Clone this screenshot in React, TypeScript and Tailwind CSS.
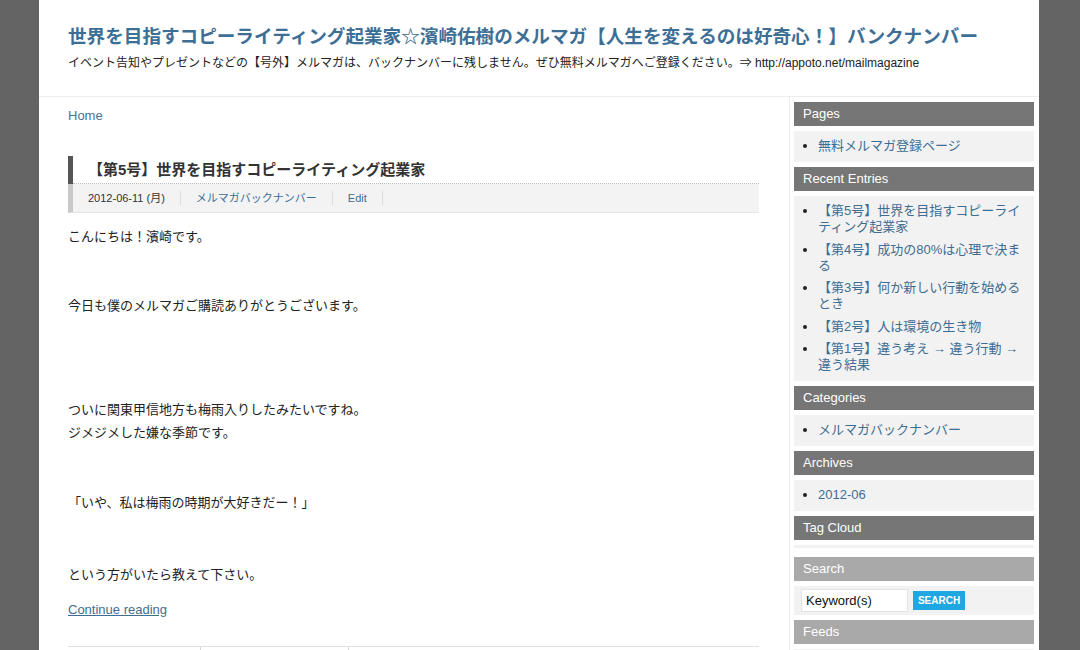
import React from 'react';

// Back-number archive page of the mail magazine blog
const recentEntries = [
  '【第5号】世界を目指すコピーライティング起業家',
  '【第4号】成功の80%は心理で決まる',
  '【第3号】何か新しい行動を始めるとき',
  '【第2号】人は環境の生き物',
  '【第1号】違う考え → 違う行動 → 違う結果',
];

function WidgetTitle({ label, light }: { label: string; light?: boolean }) {
  return (
    <div
      className={`h-[24px] flex items-center pl-[9px] text-[13px] text-white ${
        light ? 'bg-[#a9a9a9]' : 'bg-[#767676]'
      }`}
    >
      {label}
    </div>
  );
}

function LinkList({ items }: { items: string[] }) {
  return (
    <ul className="mt-[5px] bg-[#f2f2f2] pl-[24px] pr-[12px] pt-[7px] pb-[8px] list-disc marker:text-[#222]">
      {items.map((item, i) => (
        <li
          key={item}
          className={`text-[13px] leading-[16px] text-[#3d6d93] ${i > 0 ? 'mt-[6.5px]' : ''}`}
        >
          {item}
        </li>
      ))}
    </ul>
  );
}

export default function App() {
  return (
    <div className="min-h-screen bg-[#646464] font-['Liberation_Sans','Noto_Sans_CJK_JP',sans-serif] text-[#222]">
      <div className="ml-[39px] w-[1000px] bg-white">
        {/* Site header */}
        <header className="h-[97px] border-b border-[#ececec] pl-[29px] pt-[23px]">
          <h1 className="text-[18.6px] leading-[28px] font-bold text-[#3d6f96]">
            世界を目指すコピーライティング起業家☆濱崎佑樹のメルマガ【人生を変えるのは好奇心！】バンクナンバー
          </h1>
          <p className="mt-[1px] text-[12px] leading-[22px] text-[#222]">
            イベント告知やプレゼントなどの【号外】メルマガは、バックナンバーに残しません。ぜひ無料メルマガへご登録ください。⇒ http://appoto.net/mailmagazine
          </p>
        </header>

        <div className="flex">
          {/* Main column */}
          <main className="w-[751px] border-r border-[#ececec] pl-[29px] pr-[30px] pt-[10px] h-[553px] overflow-hidden">
            <div className="text-[13px] leading-[18px] text-[#4a7194]">Home</div>

            <article className="mt-[31px]">
              <div className="border-l-[5px] border-[#555]">
                <div className="h-[28px] border-b border-dotted border-[#bbb] flex items-center pl-[15px]">
                  <h2 className="text-[15px] font-bold text-[#333] leading-[20px]">
                    【第5号】世界を目指すコピーライティング起業家
                  </h2>
                </div>
              </div>
              <div className="h-[29px] border-l-[5px] border-[#c9c9c9] bg-[#f3f3f3] border-b border-b-[#e6e6e6] flex items-center pl-[15px] text-[11px]">
                <span className="text-[#333]">2012-06-11 (月)</span>
                <span className="mx-[15px] h-[14px] w-px bg-[#dcdcdc]" />
                <span className="text-[#3d6d93]">メルマガバックナンバー</span>
                <span className="mx-[15px] h-[14px] w-px bg-[#dcdcdc]" />
                <span className="text-[#3d6d93]">Edit</span>
                <span className="ml-[15px] h-[14px] w-px bg-[#dcdcdc]" />
              </div>

              <div className="text-[13px] leading-[23px] text-[#222]">
                <p className="mt-[12px]">こんにちは！濱崎です。</p>
                <p className="mt-[46px]">今日も僕のメルマガご購読ありがとうございます。</p>
                <p className="mt-[81px]">
                  ついに関東甲信地方も梅雨入りしたみたいですね。
                  <br />
                  ジメジメした嫌な季節です。
                </p>
                <p className="mt-[47px]">「いや、私は梅雨の時期が大好きだー！」</p>
                <p className="mt-[49px]">という方がいたら教えて下さい。</p>
                <p className="mt-[12px]">
                  <span className="text-[#3f6e91] underline">Continue reading</span>
                </p>
              </div>

              {/* Post navigation strip */}
              <div className="mt-[25px] flex border-t border-[#e2e2e2] h-[20px]">
                <div className="w-[132px]" />
                <div className="w-[148px] border-l border-[#d5d5d5]" />
                <div className="flex-1 border-l border-[#d5d5d5]" />
              </div>
            </article>
          </main>

          {/* Sidebar */}
          <aside className="w-[249px] pl-[4px] pr-[5px] pt-[5px]">
            <WidgetTitle label="Pages" />
            <LinkList items={['無料メルマガ登録ページ']} />

            <div className="mt-[5px]">
              <WidgetTitle label="Recent Entries" />
              <LinkList items={recentEntries} />
            </div>

            <div className="mt-[5px]">
              <WidgetTitle label="Categories" />
              <LinkList items={['メルマガバックナンバー']} />
            </div>

            <div className="mt-[5px]">
              <WidgetTitle label="Archives" />
              <LinkList items={['2012-06']} />
            </div>

            <div className="mt-[5px]">
              <WidgetTitle label="Tag Cloud" />
              <div className="mt-[5px] h-[3px] bg-[#f2f2f2]" />
            </div>

            <div className="mt-[9px]">
              <WidgetTitle label="Search" light />
              <div className="mt-[5px] h-[29px] bg-[#f2f2f2] flex items-center pl-[7px]">
                <div className="h-[23px] w-[107px] bg-white border border-[#e3e3e3] flex items-center pl-[4px] text-[13px] text-[#111]">
                  Keyword(s)
                </div>
                <div className="ml-[5px] h-[19px] w-[52px] bg-[#1ea7e1] flex items-center justify-center text-[10px] font-bold text-white">
                  SEARCH
                </div>
              </div>
            </div>

            <div className="mt-[5px]">
              <WidgetTitle label="Feeds" light />
              <div className="mt-[5px] h-[20px] bg-[#f2f2f2]" />
            </div>
          </aside>
        </div>
      </div>
    </div>
  );
}
